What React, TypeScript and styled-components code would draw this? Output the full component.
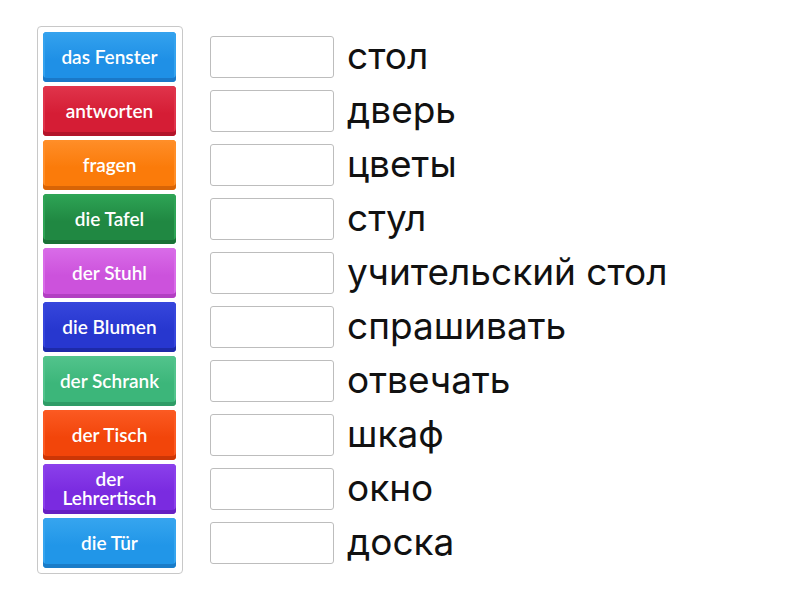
import React from "react"
import styled, { createGlobalStyle } from "styled-components"

const GlobalStyle = createGlobalStyle`
  html, body {
    margin: 0;
    padding: 0;
    background: #ffffff;
  }
`

const Page = styled.div`
  display: flex;
  align-items: flex-start;
  padding: 26px 0 0 37px;
  gap: 27px;
`

const TilePanel = styled.div`
  display: flex;
  flex-direction: column;
  gap: 4px;
  padding: 5px 6px 5px 5px;
  border: 1px solid #c8c8c8;
  border-radius: 4px;
`

const Tile = styled.div<{ color: string; dark: string; light: string }>`
  display: flex;
  align-items: center;
  justify-content: center;
  box-sizing: border-box;
  width: 133px;
  height: 50px;
  border-radius: 4px;
  background: linear-gradient(${p => p.light}, ${p => p.color} 55%, ${p => p.color});
  box-shadow: inset 0 2px 0 ${p => p.light}, inset 0 -4px 0 ${p => p.dark},
    inset 2px 0 0 ${p => p.light}, inset -2px 0 0 ${p => p.light};
  color: #ffffff;
  font-family: Lato, "Open Sans", sans-serif;
  font-size: 19px;
  font-weight: 600;
  line-height: 19px;
  text-align: center;
  padding: 0 10px 2px;
`

const Answers = styled.div`
  display: flex;
  flex-direction: column;
  gap: 12px;
  padding-top: 10px;
`

const Row = styled.div`
  display: flex;
  align-items: center;
  gap: 13px;
  height: 42px;
`

const Slot = styled.div`
  box-sizing: border-box;
  width: 124px;
  height: 42px;
  border: 1px solid #bdbdbd;
  border-radius: 3px;
  background: #ffffff;
`

const Word = styled.span`
  font-family: Inter, Roboto, sans-serif;
  font-size: 37px;
  color: #111111;
  line-height: 1;
  padding-bottom: 4px;
`

const tiles = [
  { text: "das Fenster", color: "#1f90e6", light: "#34a2ee", dark: "#1a78c8" },
  { text: "antworten", color: "#d51d35", light: "#e0344b", dark: "#b3142a" },
  { text: "fragen", color: "#fb7b0a", light: "#ff8e28", dark: "#d86406" },
  { text: "die Tafel", color: "#208842", light: "#2ea455", dark: "#1a7036" },
  { text: "der Stuhl", color: "#cc52dc", light: "#d96ce8", dark: "#b23fc2" },
  { text: "die Blumen", color: "#2737cf", light: "#3646dc", dark: "#1d2aa8" },
  { text: "der Schrank", color: "#3cb67a", light: "#52c48c", dark: "#2f9c66" },
  { text: "der Tisch", color: "#f2450a", light: "#fb5a22", dark: "#cc3606" },
  { text: "der Lehrertisch", color: "#7a2be0", light: "#8b40eb", dark: "#6620c2" },
  { text: "die Tür", color: "#2196e8", light: "#36a5ef", dark: "#1a7cc8" },
]

const words = [
  "стол",
  "дверь",
  "цветы",
  "стул",
  "учительский стол",
  "спрашивать",
  "отвечать",
  "шкаф",
  "окно",
  "доска",
]

export default function App() {
  return (
    <>
      <GlobalStyle />
      <Page>
        <TilePanel>
          {tiles.map(t => (
            <Tile key={t.text} color={t.color} light={t.light} dark={t.dark}>
              {t.text}
            </Tile>
          ))}
        </TilePanel>
        <Answers>
          {words.map(w => (
            <Row key={w}>
              <Slot />
              <Word>{w}</Word>
            </Row>
          ))}
        </Answers>
      </Page>
    </>
  )
}
